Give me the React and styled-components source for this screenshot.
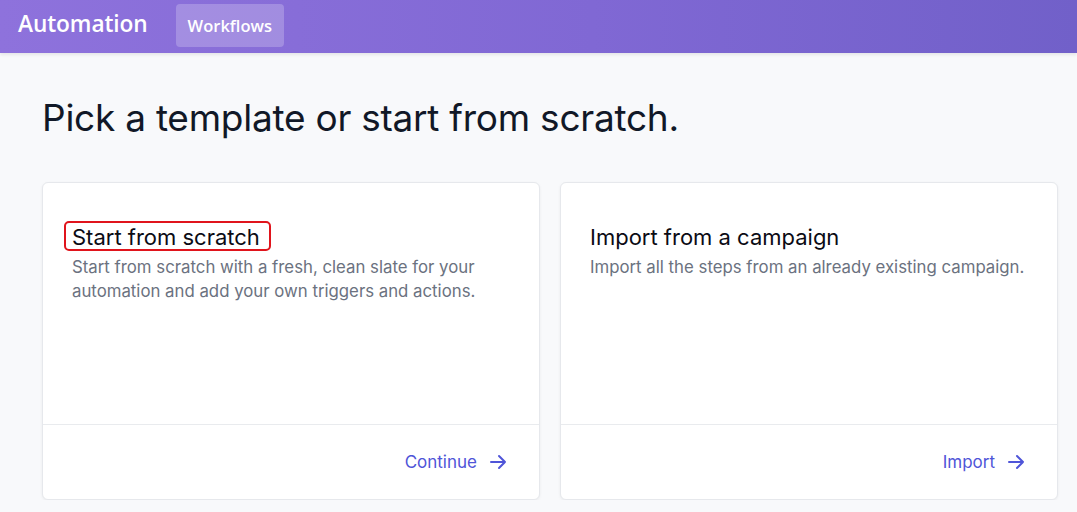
import React from 'react';
import styled, { createGlobalStyle } from 'styled-components';

const GlobalStyle = createGlobalStyle`
  * { box-sizing: border-box; }
  html, body { margin: 0; padding: 0; }
  body {
    background: #f8f9fb;
    font-family: Inter, "Noto Sans", sans-serif;
    color: #111827;
  }
`;

const Header = styled.header`
  height: 53px;
  display: flex;
  align-items: center;
  padding-left: 18px;
  gap: 28px;
  background: linear-gradient(90deg, #8e72dc 0%, #8068d4 55%, #7160c9 100%);
  box-shadow: 0 2px 3px rgba(0, 0, 0, 0.08);
`;

const Brand = styled.div`
  font-family: "Open Sans", sans-serif;
  font-weight: 600;
  font-size: 22.7px;
  line-height: 30px;
  margin-bottom: 5px;
  color: #ffffff;
  letter-spacing: -0.1px;
`;

const NavButton = styled.div`
  height: 43px;
  padding: 0 12px;
  margin-bottom: 2px;
  display: flex;
  align-items: center;
  border-radius: 4px;
  background: rgba(255, 255, 255, 0.22);
  color: #ffffff;
  font-family: "Open Sans", sans-serif;
  font-weight: 600;
  font-size: 16.5px;
`;

const Main = styled.main`
  padding: 41px 0 0 42px;
`;

const Title = styled.h1`
  margin: 0 0 40px;
  font-weight: 400;
  font-size: 37px;
  line-height: 48px;
  color: #111827;
  letter-spacing: -0.25px;
`;

const Cards = styled.div`
  display: grid;
  grid-template-columns: 498px 498px;
  gap: 20px;
`;

const Card = styled.div`
  height: 318px;
  background: #ffffff;
  border: 1px solid #e6e8ec;
  border-radius: 6px;
  box-shadow: 0 1px 3px rgba(0, 0, 0, 0.06);
  display: flex;
  flex-direction: column;
`;

const CardBody = styled.div`
  flex: 1;
  padding: 38px 29px 0;
  border-bottom: 1px solid #e9ebee;
`;

const CardTitle = styled.h2`
  display: inline-block;
  margin: 0 0 0 -8px;
  padding: 2px 9px 0 6px;
  font-weight: 400;
  font-size: 22px;
  line-height: 24px;
  color: #0b0b14;
  border: 2px solid ${p => (p.$marked ? '#e0141c' : 'transparent')};
  border-radius: 5px;
`;

const CardText = styled.p`
  margin: 4px 0 0;
  font-size: 16.8px;
  line-height: 24px;
  color: #6b7280;
`;

const CardFooter = styled.div`
  height: 74px;
  display: flex;
  align-items: center;
  justify-content: flex-end;
  padding-right: 31px;
`;

const Action = styled.a`
  display: flex;
  align-items: center;
  gap: 11px;
  font-size: 17px;
  color: #4f55d8;
  text-decoration: none;
`;

const Arrow = () => (
  <svg width="20" height="20" viewBox="0 0 20 20" fill="none" stroke="#4f55d8" strokeWidth="2" strokeLinecap="round" strokeLinejoin="round">
    <path d="M3 10h14M11 4l6 6-6 6" />
  </svg>
);

const cards = [
  {
    title: 'Start from scratch',
    text: 'Start from scratch with a fresh, clean slate for your automation and add your own triggers and actions.',
    action: 'Continue',
    marked: true,
  },
  {
    title: 'Import from a campaign',
    text: 'Import all the steps from an already existing campaign.',
    action: 'Import',
  },
];

export default function App() {
  return (
    <>
      <GlobalStyle />
      <Header>
        <Brand>Automation</Brand>
        <NavButton>Workflows</NavButton>
      </Header>
      <Main>
        <Title>Pick a template or start from scratch.</Title>
        <Cards>
          {cards.map(card => (
            <Card key={card.title}>
              <CardBody>
                <CardTitle $marked={card.marked}>{card.title}</CardTitle>
                <CardText>{card.text}</CardText>
              </CardBody>
              <CardFooter>
                <Action href="#">
                  {card.action}
                  <Arrow />
                </Action>
              </CardFooter>
            </Card>
          ))}
        </Cards>
      </Main>
    </>
  );
}
